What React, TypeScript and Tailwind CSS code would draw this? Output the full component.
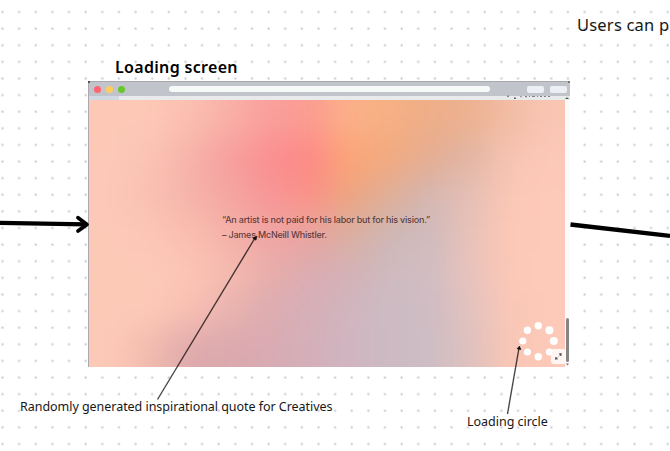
const spinnerDots = [
  [20.3, 4.7, 3.7], [31.4, 9.3, 4], [35.8, 20, 4], [31.4, 31, 3.6],
  [20.3, 35.7, 3.7], [9.4, 31, 3.6], [4.8, 20, 3.6], [9.4, 9.3, 3.7],
];

// Colour mesh of the wallpaper, row by row; the blur melts the cells together.
const mesh = [
  ['#fdc9b6', '#fdc8b6', '#fbbfb0', '#f9b0a8', '#fa9f9b', '#fb9c92', '#fcb088', '#f5b083', '#efae88', '#ecb190', '#f2bda4', '#fac6b4'],
  ['#fdc9b7', '#fbc4b5', '#f7b3aa', '#f79f9e', '#fb8f91', '#fd8886', '#fda576', '#f3aa7e', '#e6ad92', '#e0b5a4', '#f8c4b3', '#fdc8b7'],
  ['#fdc8b7', '#f9c1b3', '#f6b3aa', '#f5a6a2', '#f79697', '#fb9287', '#eea580', '#dfae97', '#d4b7b2', '#e5bfb5', '#fcc7b6', '#fdc9b8'],
  ['#fdc9b7', '#fcc6b5', '#f9beb0', '#f5b1a8', '#f1a5a3', '#ebA39e', '#dbae9f', '#cfb7b4', '#cfbbbe', '#e8c1b8', '#fdc8b6', '#fdc9b8'],
  ['#fdc9b7', '#fdc9b7', '#fcc5b5', '#f6bbb0', '#e9aeab', '#dbabb0', '#d3b2b6', '#cebac0', '#d1bdc2', '#e8c2bc', '#fcc8b7', '#fdc9b8'],
  ['#fdc9b7', '#fdc9b7', '#f9c0b3', '#eab3af', '#dcacb0', '#d6afb8', '#d1b5bf', '#cdbbc3', '#cebcc3', '#e2c2bf', '#fac7b7', '#fdc9b8'],
  ['#fdc9b7', '#f2bbaf', '#dfaaac', '#dba8ae', '#d9abb2', '#d4afb9', '#d0b5c0', '#ccbac3', '#cebdc4', '#dec1bf', '#f9c6b6', '#fdc9b8'],
];

function DotGrid() {
  return (
    <svg className="absolute inset-0 h-full w-full" aria-hidden="true">
      <defs>
        <pattern id="dots" x="-6" y="3.6" width="16.63" height="16.615" patternUnits="userSpaceOnUse">
          <rect x="7.5" y="7.4" width="2" height="2" fill="#c3c6d8" />
        </pattern>
      </defs>
      <rect width="670" height="451" fill="url(#dots)" />
    </svg>
  );
}

function Artwork() {
  const cols = mesh[0].length;
  const rows = mesh.length;
  const w = 480 / cols;
  const h = 267 / rows;
  const bleed = 70;
  return (
    <svg className="absolute inset-0 h-full w-full" viewBox="0 0 476 267" preserveAspectRatio="none" aria-hidden="true">
      <defs>
        <filter id="melt" x="-80" y="-80" width="640" height="430" filterUnits="userSpaceOnUse" colorInterpolationFilters="sRGB">
          <feGaussianBlur stdDeviation="16" />
        </filter>
      </defs>
      <g filter="url(#melt)">
        {mesh.map((row, j) =>
          row.map((fill, i) => {
            const x0 = i === 0 ? -bleed : i * w;
            const y0 = j === 0 ? -bleed : j * h;
            const x1 = i === cols - 1 ? 480 + bleed : (i + 1) * w + 0.5;
            const y1 = j === rows - 1 ? 267 + bleed : (j + 1) * h + 0.5;
            return <rect key={`${i}-${j}`} x={x0} y={y0} width={x1 - x0} height={y1 - y0} fill={fill} />;
          })
        )}
      </g>
    </svg>
  );
}

function LoadingCircle() {
  return (
    <svg className="absolute left-[429px] top-[220.5px] h-10 w-10" viewBox="0 0 40 40" aria-hidden="true">
      {spinnerDots.map(([cx, cy, r]) => (
        <circle key={`${cx}-${cy}`} cx={cx} cy={cy} r={r} fill="#fff" />
      ))}
    </svg>
  );
}

function BrowserWindow() {
  return (
    <section className="absolute left-[88px] top-[81px] flex h-[286px] w-[482px] flex-col border-l border-[#aaa9ae] bg-[#fbfbfc]">
      <header className="flex h-[15px] shrink-0 items-center border-t border-[#a9a9ad] bg-[#c1c4ca] pl-[5px] pr-[3px]">
        <div className="flex gap-[5px]">
          <i className="size-[7px] rounded-full bg-[#ff6470]" />
          <i className="size-[7px] rounded-full bg-[#fecd5e]" />
          <i className="size-[7px] rounded-full bg-[#65c92d]" />
        </div>
        <div className="ml-[44px] h-[5.5px] w-[321px] rounded-full bg-[#f8faf9]" />
        <div className="ml-auto flex gap-[6px]">
          <i className="h-[7px] w-[17px] rounded-[2px] bg-[#eceff3]" />
          <i className="h-[7px] w-[17px] rounded-[2px] bg-[#eceff3]" />
        </div>
      </header>
      <div className="flex h-[4px] shrink-0 bg-[#e8eaec]">
        <div className="w-[30px] bg-[#d3d9e2]" />
      </div>
      <div className="flex min-h-0 flex-1">
        <main className="relative w-[476px] overflow-hidden">
          <Artwork />
          <blockquote className="relative pl-[133px] pt-[111.5px] font-['Inter','Liberation_Sans',sans-serif] text-[9px] font-medium leading-[15px] text-[#3f292a]/85">
            <p className="whitespace-nowrap tracking-[-0.21px]">“An artist is not paid for his labor but for his vision.”</p>
            <p className="whitespace-nowrap tracking-[-0.22px]">– James McNeill Whistler.</p>
          </blockquote>
          <LoadingCircle />
        </main>
        <div className="flex flex-1 flex-col items-center justify-end pb-[5px]">
          <div className="h-[44px] w-[3px] rounded-full bg-[#858585]" />
        </div>
      </div>
      <div className="absolute bottom-[3px] left-[462px] flex h-[15px] w-[15px] items-center justify-center rounded-[3px] bg-[#fffaf8]/90">
        <svg width="9" height="9" viewBox="0 0 9 9" fill="#555">
          <path d="M4.8 1.6L7.6 1V3.8L6.4 4ZM1.2 5L2.6 5.2L4 7.2L1.2 7.8Z" />
          <path d="M3 6L6 3" stroke="#aaa" strokeWidth=".6" />
        </svg>
      </div>
      <svg className="absolute left-[415px] top-[14px]" width="67" height="6" viewBox="0 0 67 6" fill="#555">
        <path d="M3 1L5.2 .6L4 2.6ZM10 2.6h1.8v1.4H10ZM16 .8l2 .9-1 .9Z" />
        <path opacity=".7" d="M21 1h2v1.2h-2ZM25 1h1v1h-1ZM28 1h3v1h-3ZM33 1h1v1h-1ZM36 1h2v1h-2ZM40 1h2v1h-2ZM44 1h2v1h-2Z" />
        <path d="M61 4L63 2.2L65 4Z" />
      </svg>
      <svg className="absolute bottom-0 left-[476px]" width="5" height="5" viewBox="0 0 5 5" fill="#777"><path d="M1 1.5H4L2.5 3.5Z" /></svg>
      <i className="absolute -left-px top-0 size-[2px] bg-[#555]" />
      <i className="absolute right-0 top-0 size-[2px] bg-[#777]" />
    </section>
  );
}

function Connectors() {
  return (
    <svg className="absolute inset-0 h-full w-full" viewBox="0 0 670 451" fill="none" stroke="#000" aria-hidden="true">
      <path d="M0 222.8L86 224.4" strokeWidth="4.3" />
      <path d="M78 217.7L87 224.4L78 231" strokeWidth="3.8" strokeLinecap="round" strokeLinejoin="round" />
      <path d="M570.5 224.5L670 235.8" strokeWidth="4.3" />
      <path d="M157.5 399.5L255 238" strokeOpacity=".72" strokeWidth="1.4" />
      <path d="M257 236L252.8 238.3L256 240.2Z" fill="#111" stroke="#111" strokeWidth=".6" />
      <path d="M507.5 414L519 348" strokeOpacity=".72" strokeWidth="1.4" />
      <path d="M519.4 346.2L517.2 348.7L520.8 349.5Z" fill="#111" stroke="#111" strokeWidth=".8" />
    </svg>
  );
}

export default function App() {
  return (
    <div className="relative h-[451px] w-[670px] overflow-hidden bg-white font-['Noto_Sans','Open_Sans',sans-serif] text-[#171717]">
      <DotGrid />
      <h1 className="absolute left-[115px] top-[56px] whitespace-nowrap text-[16px] font-semibold leading-[22px] tracking-[0.32px] text-black">Loading screen</h1>
      <p className="absolute left-[577px] top-[14px] whitespace-nowrap text-[16.5px] leading-[22px] tracking-[0.2px]">Users can p</p>
      <BrowserWindow />
      <p className="absolute left-[20px] top-[398px] whitespace-nowrap text-[12.5px] leading-[17px] tracking-[-0.04px]">Randomly generated inspirational quote for Creatives</p>
      <p className="absolute left-[467px] top-[413px] whitespace-nowrap text-[12.5px] leading-[17px] tracking-[-0.02px]">Loading circle</p>
      <Connectors />
    </div>
  );
}
